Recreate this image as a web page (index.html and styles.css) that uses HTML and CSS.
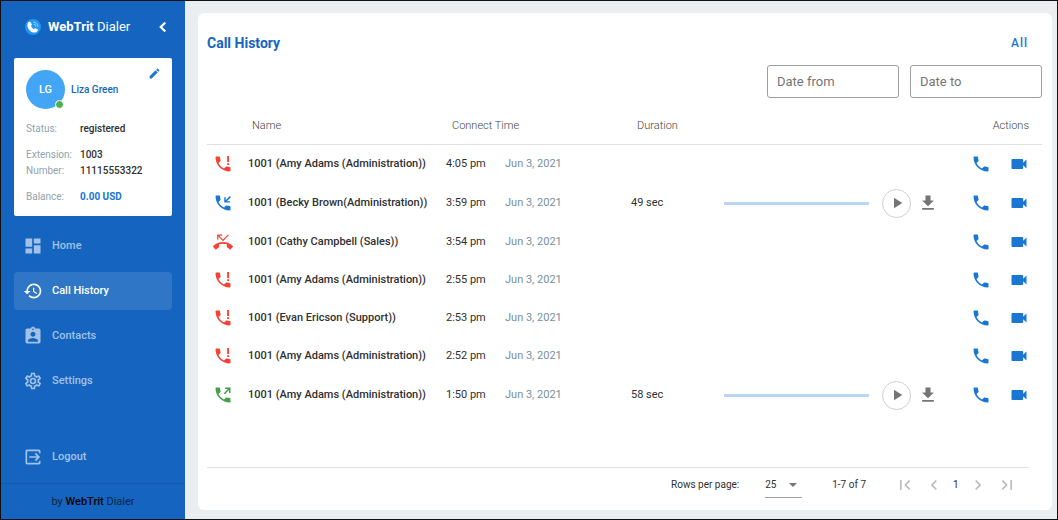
FILE: index.html
```html
<!DOCTYPE html>
<html lang="en">
<head>
<meta charset="utf-8">
<meta name="viewport" content="width=device-width, initial-scale=1">
<title>WebTrit Dialer</title>
<link rel="stylesheet" href="styles.css">
<script src="app.js" defer></script>
</head>
<body>
<svg class="sprite" aria-hidden="true">
  <symbol id="phone" viewBox="0 0 24 24"><path d="M6.62 10.79c1.44 2.83 3.76 5.14 6.59 6.59l2.2-2.2c.27-.27.67-.36 1.02-.24 1.12.37 2.33.57 3.57.57.55 0 1 .45 1 1V20c0 .55-.45 1-1 1-9.39 0-17-7.61-17-17 0-.55.45-1 1-1h3.5c.55 0 1 .45 1 1 0 1.25.2 2.45.57 3.57.11.35.03.74-.25 1.02l-2.2 2.2z"/></symbol>
  <symbol id="failed" viewBox="0 0 24 24"><use href="#phone"/><path d="M17 2.500h2.300v7H17zM17 11h2.300v2.300H17z"/></symbol>
  <symbol id="incoming" viewBox="0 0 24 24"><use href="#phone"/><path d="M20.500 11.500V10h-4L21.500 5l-1.300-1.300-5 5V5H13.500v6.500z"/></symbol>
  <symbol id="outgoing" viewBox="0 0 24 24"><use href="#phone"/><path d="M14.500 3v1.800h3.400l-5 5 1.300 1.300 5-5v3.400H21V3z"/></symbol>
  <symbol id="missed" viewBox="0 0 24 24"><path d="M6.5 5.500L12 11l7-7-1-1-6 6-4.500-4.500H11V3H5v6h1.500V5.500zm17.210 11.170C20.660 13.780 16.540 12 12 12 7.460 12 3.340 13.780.29 16.670c-.18.18-.29.43-.29.71s.11.53.29.71l2.480 2.480c.18.18.43.29.71.29.27 0 .52-.11.7-.28.79-.74 1.690-1.360 2.660-1.850.33-.16.56-.5.56-.9v-3.100c1.450-.48 3-.73 4.600-.73 1.600 0 3.150.25 4.600.72v3.100c0 .39.23.74.56.9.98.49 1.870 1.120 2.670 1.850.18.18.43.28.7.28.28 0 .53-.11.71-.29l2.480-2.480c.18-.18.29-.43.29-.71s-.12-.52-.3-.7z"/></symbol>
  <symbol id="video" viewBox="0 0 24 24"><path d="M17 10.500V7c0-.55-.45-1-1-1H4c-.55 0-1 .45-1 1v10c0 .55.45 1 1 1h12c.55 0 1-.45 1-1v-3.500l4 4v-11l-4 4z"/></symbol>
  <symbol id="download" viewBox="0 0 24 24"><path d="M19 9h-4V3H9v6H5l7 7 7-7zM5 18v2h14v-2H5z"/></symbol>
  <symbol id="play" viewBox="0 0 24 24"><path d="M8 5v14l11-7z"/></symbol>
  <symbol id="left" viewBox="0 0 24 24"><path d="M15.410 7.410L14 6l-6 6 6 6 1.410-1.410L10.830 12z"/></symbol>
  <symbol id="right" viewBox="0 0 24 24"><path d="M10 6L8.590 7.410 13.170 12l-4.580 4.590L10 18l6-6z"/></symbol>
  <symbol id="first" viewBox="0 0 24 24"><path d="M18.410 16.590L13.820 12l4.590-4.590L17 6l-6 6 6 6zM6 6h2v12H6z"/></symbol>
  <symbol id="last" viewBox="0 0 24 24"><path d="M5.590 7.410L10.180 12l-4.590 4.590L7 18l6-6-6-6zM16 6h2v12h-2z"/></symbol>
</svg>

<div class="app">
  <aside class="sidebar">
    <div class="brand">
      <svg class="logo" viewBox="0 0 24 24" aria-hidden="true"><circle cx="12" cy="12" r="12" fill="#2196f3"/><path fill="#fff" d="M3.800 7c.8-2.700 3.700-3.500 4.700-2l1.600 3.200c.4 1-1.200 1.900-.9 2.800.6 1.700 2 3.200 3.800 3.900.9.200 1.600-1.500 2.700-1.100l3.200 1.600c1.300.9-.5 4.300-3.200 4.900C9.500 21.500 2.200 14 3.800 7z"/><path fill="none" stroke="#bbdefb" stroke-width="1.200" d="M12.500 4.500a7 7 0 0 1 7 7M12.500 7.500a4 4 0 0 1 4 4"/></svg>
      <span class="brand-name"><b>WebTrit</b> Dialer</span>
      <button class="icon-button collapse" aria-label="Collapse menu"><svg viewBox="0 0 24 24"><path fill="none" stroke="currentColor" stroke-width="3" d="M15 6L9 12l6 6"/></svg></button>
    </div>

    <section class="profile">
      <div class="person">
        <span class="avatar">LG<i class="presence"></i></span>
        <strong>Liza Green</strong>
        <button class="icon-button edit" aria-label="Edit profile"><svg viewBox="0 0 24 24"><path d="M3 17.250V21h3.750L17.810 9.940l-3.750-3.750L3 17.250zM20.710 7.040c.39-.39.39-1.020 0-1.410l-2.340-2.340c-.39-.39-1.020-.39-1.410 0l-1.830 1.830 3.750 3.750 1.830-1.830z"/></svg></button>
      </div>
      <dl class="details">
        <dt>Status:</dt><dd>registered</dd>
        <dt class="group">Extension:</dt><dd class="group">1003</dd>
        <dt>Number:</dt><dd>11115553322</dd>
        <dt class="group">Balance:</dt><dd class="group balance">0.00 USD</dd>
      </dl>
    </section>

    <nav class="menu">
      <a href="#home"><svg viewBox="0 0 24 24"><path d="M3 13h8V3H3v10zm0 8h8v-6H3v6zm10 0h8V11h-8v10zm0-18v6h8V3h-8z"/></svg>Home</a>
      <a href="#history" class="active" aria-current="page"><svg viewBox="0 0 24 24"><path d="M13 3a9 9 0 0 0-9 9H1l3.890 3.890.07.14L9 12H6c0-3.870 3.130-7 7-7s7 3.130 7 7-3.130 7-7 7c-1.930 0-3.680-.79-4.940-2.060l-1.420 1.420A8.954 8.954 0 0 0 13 21a9 9 0 0 0 0-18zm-1 5v5l4.280 2.540.72-1.210-3.500-2.080V8H12z"/></svg>Call History</a>
      <a href="#contacts"><svg viewBox="0 0 24 24"><path d="M19 3h-4.180C14.400 1.840 13.300 1 12 1c-1.300 0-2.400.84-2.820 2H5c-1.100 0-2 .9-2 2v14c0 1.100.9 2 2 2h14c1.100 0 2-.9 2-2V5c0-1.100-.9-2-2-2zm-7 0c.55 0 1 .45 1 1s-.45 1-1 1-1-.45-1-1 .45-1 1-1zm0 4c1.660 0 3 1.340 3 3s-1.340 3-3 3-3-1.340-3-3 1.340-3 3-3zm6 12H6v-1.400c0-2 4-3.100 6-3.100s6 1.100 6 3.100V19z"/></svg>Contacts</a>
      <a href="#settings"><svg viewBox="0 0 24 24"><path d="M12 8a4 4 0 0 1 4 4 4 4 0 0 1-4 4 4 4 0 0 1-4-4 4 4 0 0 1 4-4m0 2a2 2 0 0 0-2 2 2 2 0 0 0 2 2 2 2 0 0 0 2-2 2 2 0 0 0-2-2m-2 12c-.25 0-.46-.18-.5-.42l-.37-2.650c-.63-.25-1.170-.59-1.690-.99l-2.490 1.010c-.22.08-.49 0-.61-.22l-2-3.460a.493.493 0 0 1 .12-.64l2.110-1.660L4.500 12l.07-1-2.110-1.630a.493.493 0 0 1-.12-.64l2-3.460c.12-.22.39-.31.61-.22l2.490 1c.52-.39 1.060-.73 1.690-.98l.37-2.650c.04-.24.25-.42.5-.42h4c.25 0 .46.18.5.42l.37 2.650c.63.25 1.170.59 1.690.98l2.490-1c.22-.09.49 0 .61.22l2 3.460c.13.22.07.49-.12.64L19.430 11l.07 1-.07 1 2.110 1.630c.19.15.25.42.12.64l-2 3.460c-.12.22-.39.31-.61.22l-2.490-1c-.52.39-1.060.73-1.690.98l-.37 2.650c-.04.24-.25.42-.5.42h-4m1.250-18l-.37 2.610c-1.200.25-2.260.89-3.030 1.780L5.440 7.350l-.75 1.300L6.800 10.200a5.550 5.550 0 0 0 0 3.600l-2.120 1.560.75 1.300 2.430-1.040c.77.88 1.820 1.520 3.010 1.760l.37 2.620h1.520l.37-2.610c1.190-.25 2.240-.89 3.010-1.770l2.430 1.040.75-1.300-2.120-1.550c.4-1.170.4-2.440 0-3.610l2.110-1.550-.75-1.300-2.410 1.040a5.420 5.420 0 0 0-3.030-1.770L12.750 4h-1.500z"/></svg>Settings</a>
      <a href="#logout" class="logout"><svg viewBox="0 0 24 24"><path d="M14.100 15.600l1.400 1.400 5-5-5-5-1.400 1.400 2.600 2.600H7.500v2h9.200zM5 3h14c1.100 0 2 .9 2 2v2.500h-2V5H5v14h14v-2.500h2V19c0 1.100-.9 2-2 2H5c-1.100 0-2-.9-2-2V5c0-1.100.9-2 2-2z"/></svg>Logout</a>
    </nav>
    <footer class="credit"><span>by <b>WebTrit</b> Dialer</span></footer>
  </aside>

  <main class="page">
    <section class="panel">
      <header class="panel-head">
        <h1>Call History</h1>
        <button class="filter">All</button>
      </header>
      <div class="dates">
        <input type="text" placeholder="Date from" aria-label="Date from">
        <input type="text" placeholder="Date to" aria-label="Date to">
      </div>
      <table class="calls">
        <colgroup><col class="col-type"><col class="col-name"><col class="col-time"><col class="col-duration"><col><col class="col-actions"></colgroup>
        <thead><tr><th></th><th>Name</th><th class="inset">Connect Time</th><th class="inset">Duration</th><th></th><th class="end">Actions</th></tr></thead>
        <tbody id="rows"></tbody>
      </table>
      <footer class="pager">
        <label for="size">Rows per page:</label>
        <span class="select"><select id="size"><option>25</option><option>50</option></select></span>
        <span class="range">1-7 of 7</span>
        <div class="pages">
          <button class="icon-button" aria-label="First page"><svg><use href="#first"/></svg></button>
          <button class="icon-button" aria-label="Previous page"><svg><use href="#left"/></svg></button>
          <span>1</span>
          <button class="icon-button" aria-label="Next page"><svg><use href="#right"/></svg></button>
          <button class="icon-button" aria-label="Last page"><svg><use href="#last"/></svg></button>
        </div>
      </footer>
    </section>
  </main>
</div>
</body>
</html>
```
FILE: styles.css
```css
* { box-sizing: border-box; }

body {
  margin: 0;
  font: 11px/16px Roboto, "Liberation Sans", sans-serif;
  color: #303030;
}

button, input, select { font: inherit; }
svg { display: block; fill: currentColor; width: 20px; height: 20px; }
.sprite { display: none; }
b, strong { font-weight: 500; }

.app {
  display: flex;
  min-height: 100vh;
  border: 1px solid #111;
  background: #eaeef1;
}

.icon-button {
  display: inline-flex;
  padding: 0;
  border: 0;
  background: none;
  color: inherit;
  cursor: pointer;
}

/* Sidebar */
.sidebar {
  display: flex;
  flex-direction: column;
  flex: 0 0 184px;
  background: #1565c0;
}

.brand {
  display: flex;
  align-items: center;
  height: 51px;
  margin-bottom: 6px;
  padding: 0 13px 0 24px;
  color: #fff;
}
.logo { width: 16px; height: 16px; }
.brand-name { margin-left: 7px; font-size: 13px; }
.brand-name b { font-weight: 700; }
.collapse { margin-left: auto; }
.collapse svg { width: 18px; height: 18px; }

.profile {
  margin: 0 13px;
  padding: 12px 12px 11px;
  border-radius: 2px;
  background: #fff;
}
.person { display: flex; align-items: center; gap: 6px; color: #1565c0; }
.person strong { font-size: 10px; }
.avatar {
  position: relative;
  display: grid;
  place-items: center;
  width: 39px;
  height: 39px;
  border-radius: 50%;
  background: #42a5f5;
  color: #fff;
  font-weight: 500;
}
.presence {
  position: absolute;
  right: 1px;
  bottom: 0;
  width: 9px;
  height: 9px;
  border: 1px solid #fff;
  border-radius: 50%;
  background: #4caf50;
}
.edit { align-self: flex-start; margin: -3px -1px 0 auto; color: #1976d2; }
.edit svg { width: 13px; height: 13px; }

.details {
  display: grid;
  grid-template-columns: 54px 1fr;
  margin: 12px 0 0;
  font-size: 10px;
}
.details dt { color: #90a4ae; }
.details dd { margin: 0; font-weight: 500; }
.details .group { margin-top: 10px; }
.details .balance { color: #1976d2; font-weight: 700; }

.menu { display: flex; flex-direction: column; flex: 1; gap: 7px; padding: 11px 13px 7px; }
.menu a {
  display: flex;
  align-items: center;
  gap: 9px;
  height: 38px;
  padding: 0 9px;
  border-radius: 4px;
  color: #a1c1e6;
  font-weight: 500;
  text-decoration: none;
}
.menu .active { background: #3076c7; color: #fff; }
.menu .logout { margin-top: auto; }

.credit {
  display: grid;
  place-items: center;
  height: 36px;
  border-top: 1px solid #125aab;
  color: #0b2545;
}
.credit b { color: #000; }

/* Call history */
.page { display: flex; flex: 1; min-width: 0; padding: 12px 5px 9px 13px; }
.panel {
  display: flex;
  flex-direction: column;
  flex: 1;
  min-width: 0;
  padding: 18px 10px 8px 9px;
  border-radius: 6px;
  background: #fff;
}
.panel-head { display: flex; align-items: center; justify-content: space-between; height: 24px; padding-right: 14px; }
h1 { margin: 0; color: #1565c0; font-size: 14px; font-weight: 700; }
.filter { padding: 0; border: 0; background: none; color: #1976d2; font-size: 12px; font-weight: 500; letter-spacing: 1px; }

.dates { display: flex; justify-content: flex-end; gap: 11px; margin-top: 10px; }
.dates input {
  width: 132px;
  height: 33px;
  padding: 0 9px;
  border: 1px solid #9e9e9e;
  border-radius: 3px;
  color: #303030;
  font-size: 13px;
}
.dates input::placeholder { color: #757575; }

.calls { width: 100%; margin-top: 7px; border-collapse: separate; border-spacing: 0; table-layout: fixed; }
.col-type { width: 36px; }
.col-name { width: 197px; }
.col-time { width: 185px; }
.col-duration { width: 93px; }
.col-actions { width: 82px; }
.calls th {
  height: 40px;
  padding: 2px 0 0 9px;
  border-bottom: 1px solid #e0e0e0;
  color: #444;
  font-weight: 300;
  text-align: left;
}
.calls .inset { padding-left: 12px; }
.calls .end { padding: 2px 13px 0 0; text-align: right; }
.calls td { height: 38px; padding: 0 0 0 6px; white-space: nowrap; }
.calls .name { padding-left: 5px; font-weight: 500; }
.failed, .missed { color: #f44336; }
.incoming { color: #1976d2; }
.outgoing { color: #43a047; }
.time { display: flex; }
.time time { width: 59px; }
.time .date { color: #78909c; }

.player { display: flex; align-items: center; height: 40px; padding-right: 22px; color: #757575; }
.track { flex: 1; height: 3px; background: #bbd6f3; }
.play {
  align-items: center;
  justify-content: center;
  width: 29px;
  height: 29px;
  margin: 0 7px 0 13px;
  border: 1px solid #d0d0d0;
  border-radius: 50%;
}
.play svg { width: 18px; height: 18px; }
.actions { display: flex; justify-content: flex-end; gap: 18px; padding-right: 13px; color: #1976d2; }

/* Pagination */
.pager {
  display: flex;
  align-items: center;
  justify-content: flex-end;
  height: 35px;
  margin: auto 13px 0 0;
  border-top: 1px solid #e0e0e0;
  font-size: 10px;
}
.select { position: relative; margin-left: 26px; border-bottom: 1px solid #9e9e9e; }
.select::after {
  content: "";
  position: absolute;
  top: 11px;
  right: 5px;
  border: 4px solid transparent;
  border-top-color: #757575;
  pointer-events: none;
}
.select select { display: block; width: 37px; height: 25px; padding: 0; border: 0; background: none; color: inherit; appearance: none; }
.range { margin-left: 30px; }
.pages { display: flex; align-items: center; margin: 0 12px 0 29px; gap: 9px; color: #bdbdbd; }
.pages span { width: 6px; color: #303030; }
```
FILE: app.js
```js
const admin = "1001 (Amy Adams (Administration))";
const calls = [
  ["failed", admin, "4:05 pm"],
  ["incoming", "1001 (Becky Brown(Administration))", "3:59 pm", "49 sec"],
  ["missed", "1001 (Cathy Campbell (Sales))", "3:54 pm"],
  ["failed", admin, "2:55 pm"],
  ["failed", "1001 (Evan Ericson (Support))", "2:53 pm"],
  ["failed", admin, "2:52 pm"],
  ["outgoing", admin, "1:50 pm", "58 sec"]
];

const icon = (id) => `<svg><use href="#${id}"/></svg>`;
const button = (id, label, extra = "") =>
  `<button class="icon-button ${extra}" aria-label="${label}">${icon(id)}</button>`;

document.getElementById("rows").innerHTML = calls.map(([type, name, time, duration]) => `
  <tr>
    <td class="${type}">${icon(type)}</td>
    <td class="name">${name}</td>
    <td><div class="time"><time>${time}</time><span class="date">Jun 3, 2021</span></div></td>
    <td>${duration || ""}</td>
    <td>${duration ? `<div class="player"><div class="track"></div>${button("play", "Play", "play")}${button("download", "Download")}</div>` : ""}</td>
    <td><div class="actions">${button("phone", "Call")}${button("video", "Video call")}</div></td>
  </tr>`).join("");
```
